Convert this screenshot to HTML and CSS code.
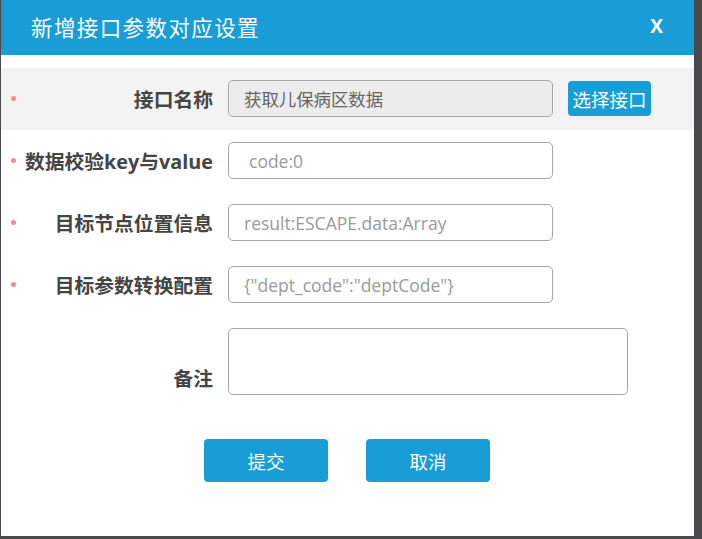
FILE: index.html
```html
<!DOCTYPE html>
<html lang="zh-CN">
<head>
<meta charset="utf-8">
<title>新增接口参数对应设置</title>
<link rel="stylesheet" href="styles.css">
</head>
<body>
<div class="dialog">
  <div class="header">
    <span class="title">新增接口参数对应设置</span>
    <span class="close">X</span>
  </div>
  <div class="form">
    <div class="row shaded">
      <span class="req"></span>
      <label class="label">接口名称</label>
      <div class="field readonly">获取儿保病区数据</div>
      <button class="pick">选择接口</button>
    </div>
    <div class="row">
      <span class="req"></span>
      <label class="label">数据校验key与value</label>
      <div class="field ph indent">code:0</div>
    </div>
    <div class="row">
      <span class="req"></span>
      <label class="label">目标节点位置信息</label>
      <div class="field ph">result:ESCAPE.data:Array</div>
    </div>
    <div class="row">
      <span class="req"></span>
      <label class="label">目标参数转换配置</label>
      <div class="field ph">{"dept_code":"deptCode"}</div>
    </div>
    <div class="row memo">
      <span class="req empty"></span>
      <label class="label">备注</label>
      <div class="area"></div>
    </div>
  </div>
  <div class="actions">
    <button class="btn">提交</button>
    <button class="btn">取消</button>
  </div>
</div>
</body>
</html>
```

FILE: styles.css
```css
html, body {
  margin: 0;
  padding: 0;
  height: 100%;
}
body {
  background: #4a4a4c;
  font-family: "Open Sans", "Noto Sans CJK SC", sans-serif;
  overflow: hidden;
}
.dialog {
  margin-left: 1px;
  width: 693px;
  height: 536px;
  background: #ffffff;
  display: flex;
  flex-direction: column;
}
.header {
  height: 55px;
  background: #189dd6;
  display: flex;
  align-items: center;
  justify-content: space-between;
  padding: 0 31px 0 30px;
  color: #ffffff;
  flex-shrink: 0;
}
.title {
  font-family: "Noto Sans CJK SC", sans-serif;
  font-size: 21.5px;
  letter-spacing: 1.4px;
  padding-bottom: 2px;
}
.close {
  font-family: "Open Sans", sans-serif;
  font-weight: 700;
  font-size: 19px;
  padding-bottom: 3px;
}
.form {
  margin-top: 13px;
  display: flex;
  flex-direction: column;
}
.row {
  height: 62px;
  display: flex;
  align-items: center;
  padding-bottom: 1px;
  box-sizing: border-box;
}
.row.shaded {
  background: #f3f3f3;
}
.req {
  width: 5px;
  height: 5px;
  border-radius: 50%;
  background: #f58a8a;
  margin-left: 10px;
  flex-shrink: 0;
}
.req.empty {
  background: transparent;
}
.label {
  width: 197px;
  text-align: right;
  font-family: "Open Sans", "Noto Sans CJK SC", sans-serif;
  font-weight: 700;
  font-size: 19.8px;
  color: #454545;
  flex-shrink: 0;
  margin-right: 15px;
  white-space: nowrap;
}
.field {
  box-sizing: border-box;
  width: 325px;
  height: 37px;
  border: 1px solid #a6a6a6;
  border-radius: 5px;
  background: #ffffff;
  padding: 0 15px;
  display: flex;
  align-items: center;
  font-size: 17.5px;
  color: #9a9a9a;
  white-space: nowrap;
}
.field.indent {
  padding-left: 20px;
}
.field.readonly {
  background: #ececec;
  color: #666666;
  font-family: "Noto Sans CJK SC", sans-serif;
  font-size: 17.4px;
}
.pick {
  margin-left: 15px;
  width: 83px;
  height: 35px;
  border: none;
  border-radius: 4px;
  background: #189dd6;
  color: #ffffff;
  font-family: "Noto Sans CJK SC", sans-serif;
  font-size: 18.5px;
  padding: 0;
}
.row.memo {
  height: 91px;
  align-items: flex-end;
  padding-bottom: 12px;
}
.row.memo .req {
  align-self: center;
}
.row.memo .label {
  padding-bottom: 3px;
}
.area {
  box-sizing: border-box;
  width: 400px;
  height: 67px;
  border: 1px solid #a6a6a6;
  border-radius: 5px;
  background: #ffffff;
}
.actions {
  margin-top: 32px;
  display: flex;
  padding-left: 203px;
  gap: 38px;
}
.btn {
  width: 124px;
  height: 43px;
  border: none;
  border-radius: 4px;
  background: #189dd6;
  color: #ffffff;
  font-family: "Noto Sans CJK SC", sans-serif;
  font-size: 18.5px;
  padding: 0;
}
```
